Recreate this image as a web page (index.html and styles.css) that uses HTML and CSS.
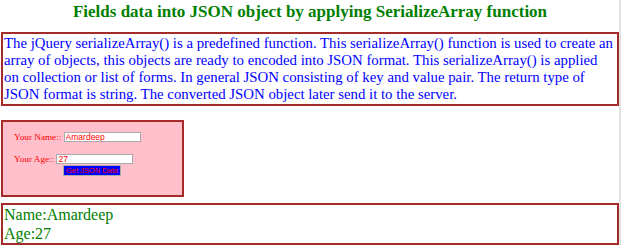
FILE: index.html
```html
<!DOCTYPE html>
<html>
<head>
<meta charset="utf-8">
<link rel="stylesheet" href="styles.css">
</head>
<body>
<div class="page">
  <h1 class="title">Fields data into JSON object by applying SerializeArray function</h1>
  <div class="desc">The jQuery serializeArray() is a predefined function. This serializeArray() function is used to create an<br>array of objects, this objects are ready to encoded into JSON format. This serializeArray() is applied<br>on collection or list of forms. In general JSON consisting of key and value pair. The return type of<br>JSON format is string. The converted JSON object later send it to the server.</div>
  <form class="form">
    <div class="row first">Your Name::&nbsp;<input class="field" type="text" value="Amardeep"></div>
    <div class="row second">Your Age::&nbsp;<input class="field" type="text" value="27"></div>
    <div class="btnrow"><button type="button" class="btn">Get JSON Data</button></div>
  </form>
  <div class="out">
    <div>Name:Amardeep</div>
    <div>Age:27</div>
  </div>
</div>
</body>
</html>
```
FILE: styles.css
```css
html, body {
  margin: 0;
  padding: 0;
  background: #fff;
}
body {
  font-family: "Liberation Serif", "Times New Roman", serif;
}
.page {
  width: 621px;
  border-right: 2px solid #e3e3e3;
  min-height: 245px;
  box-sizing: border-box;
  padding: 0 0 0 1px;
}
.title {
  margin: 0;
  padding-top: 2px;
  height: 32px;
  box-sizing: border-box;
  text-align: center;
  color: #008000;
  font-size: 17px;
  font-weight: bold;
}
.desc {
  width: 618px;
  box-sizing: border-box;
  border: 2px solid #a52a2a;
  color: #0000ff;
  font-size: 14.8px;
  line-height: 17px;
  padding: 1px 0 1px 1px;
  white-space: nowrap;
}
.form {
  margin-top: 14px;
  width: 183px;
  height: 77px;
  box-sizing: border-box;
  background: #ffc0cb;
  border: 2px solid #a52a2a;
  padding: 10px 0 0 11px;
  color: #ff0000;
  font-size: 9.2px;
}
.row {
  display: flex;
  align-items: center;
  height: 10px;
}
.first { margin-bottom: 12px; }
.second { margin-bottom: 1px; }
.field {
  font-family: "Liberation Sans", Arial, sans-serif;
  font-size: 8.5px;
  color: #ff0000;
  width: 77px;
  height: 10px;
  box-sizing: border-box;
  padding: 0 1px;
  border: 1px solid #aaa;
  margin: 0;
  background: #fff;
}
.btnrow {
  padding-left: 49px;
}
.btn {
  display: block;
  background: #0000ff;
  color: #ff0000;
  font-family: "Liberation Sans", Arial, sans-serif;
  font-size: 7.5px;
  line-height: 9px;
  border: 1px solid #aaa;
  width: 58px;
  height: 11px;
  padding: 0;
  margin: 0;
}
.out {
  margin-top: 6px;
  width: 618px;
  box-sizing: border-box;
  border: 2px solid #a52a2a;
  color: #008000;
  font-size: 16px;
  line-height: 19px;
  padding: 0 0 0 1px;
}
```
